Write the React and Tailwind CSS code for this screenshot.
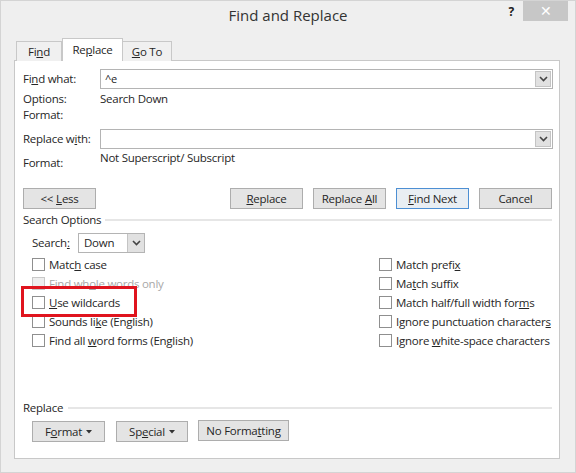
import React from 'react';

const Chevron = () => (
    <svg width="9" height="6" viewBox="0 0 9 6" fill="none">
        <path d="M1 1 L4.5 4.5 L8 1" stroke="#444" strokeWidth="1.6" />
    </svg>
);

const Caret = () => (
    <svg width="6" height="4" viewBox="0 0 6 4" className="ml-[4px]">
        <path d="M0 0 H6 L3 3.5 Z" fill="#333" />
    </svg>
);

const Combo = ({ value }) => (
    <div className="flex-1 h-[20px] border border-[#b4b4b4] bg-white flex items-center">
        <span className="flex-1 pl-[4px] text-[11px]">{value}</span>
        <div className="w-[16px] h-[16px] mr-[1px] bg-[#e1e1e1] border border-[#c4c4c4] flex items-center justify-center">
            <Chevron />
        </div>
    </div>
);

const Button = ({ children, className = '', primary }) => (
    <div
        className={
            'h-[21px] flex items-center justify-center border whitespace-nowrap ' +
            (primary ? 'border-[#4d8fd3] bg-[#e9eef3] ' : 'border-[#adadad] bg-[#e4e4e4] ') +
            className
        }
    >
        {children}
    </div>
);

const Check = ({ label, disabled }) => (
    <div className={'h-[19px] flex items-center whitespace-nowrap ' + (disabled ? 'text-[#a8a8a8]' : '')}>
        <div
            className={
                'w-[13px] h-[13px] shrink-0 border mr-[4px] ' +
                (disabled ? 'border-[#c8c8c8] bg-[#eeeeee]' : 'border-[#8f8f8f] bg-white')
            }
        />
        <span>{label}</span>
    </div>
);

export default function App() {
    return (
        <div
            className="w-[576px] h-[473px] bg-[#efefef] border border-[#d4d4d4] flex flex-col text-[11.5px] leading-[16px] tracking-[-0.25px] text-[#262626]"
            style={{ fontFamily: '"Segoe UI", "Open Sans", "Noto Sans", sans-serif' }}
        >
            {/* title bar */}
            <div className="h-[34px] flex items-start">
                <div className="w-[80px]" />
                <div className="flex-1 text-center text-[15px] leading-[20px] pt-[4px] tracking-normal text-[#333]">Find and Replace</div>
                <div className="w-[80px] flex items-start justify-end pr-[7px]">
                    <span className="font-bold text-[12px] mt-[3px] mr-[9px] text-[#222]">?</span>
                    <div className="w-[45px] h-[20px] bg-[#c7c7c7] flex items-center justify-center text-white text-[14px]">✕</div>
                </div>
            </div>

            {/* tabs */}
            <div className="flex items-end pl-[15px] h-[26px] -mb-px relative z-10">
                <div className="w-[46px] h-[20px] border border-[#c8c8c8] border-b-0 bg-[#f0f0f0] flex items-center justify-center">
                    <span>Fi<u>n</u>d</span>
                </div>
                <div className="w-[61px] h-[23px] border border-[#c8c8c8] border-b-0 bg-white flex items-center justify-center">
                    <span>Re<u>p</u>lace</span>
                </div>
                <div className="w-[49px] h-[20px] border border-[#c8c8c8] border-b-0 border-l-0 bg-[#f0f0f0] flex items-center justify-center">
                    <span><u>G</u>o To</span>
                </div>
            </div>

            {/* panel */}
            <div className="ml-[13px] w-[546px] h-[399px] bg-white border border-[#c8c8c8] pt-[8px] pl-[8px] pr-[6px] flex flex-col">
                <div className="flex items-center h-[20px]">
                    <span className="w-[77px]">Fi<u>n</u>d what:</span>
                    <Combo value="^e" />
                </div>
                <div className="flex h-[16px] mt-[2px]">
                    <span className="w-[77px]">Options:</span>
                    <span>Search Down</span>
                </div>
                <div className="flex h-[16px]">
                    <span className="w-[77px]">Format:</span>
                </div>
                <div className="flex items-center h-[20px] mt-[6px]">
                    <span className="w-[77px]">Replace w<u>i</u>th:</span>
                    <Combo value="" />
                </div>
                <div className="flex h-[22px] mt-[1px]">
                    <span className="w-[77px] pt-[5px]">Format:</span>
                    <span>Not Superscript/ Subscript</span>
                </div>

                <div className="flex h-[21px] mt-[16px]">
                    <Button className="w-[73px]">&lt;&lt; <u className="ml-[3px]">L</u>ess</Button>
                    <Button className="w-[73px] ml-[134px]"><u>R</u>eplace</Button>
                    <Button className="w-[73px] ml-[10px]">Replace <u className="ml-[3px]">A</u>ll</Button>
                    <Button className="w-[73px] ml-[10px]" primary><u>F</u>ind Next</Button>
                    <Button className="w-[73px] ml-[10px]">Cancel</Button>
                </div>

                <div className="flex items-center h-[16px] mt-[3px]">
                    <span>Search Options</span>
                    <div className="flex-1 h-[2px] bg-[#e6e6e6] ml-[4px] mr-[1px]" />
                </div>

                <div className="flex items-center h-[20px] mt-[5px] ml-[9px]">
                    <span className="w-[46px]">Search<u>:</u></span>
                    <div className="w-[67px] h-[20px] border border-[#b4b4b4] flex items-center">
                        <span className="flex-1 pl-[5px]">Down</span>
                        <div className="w-[17px] h-[18px] bg-[#e1e1e1] border-l border-[#c4c4c4] flex items-center justify-center">
                            <Chevron />
                        </div>
                    </div>
                </div>

                <div className="flex mt-[2px] ml-[9px] relative">
                    <div className="w-[347px] shrink-0 flex flex-col">
                        <Check label={<>Matc<u>h</u> case</>} />
                        <Check label={<>Find wh<u>o</u>le words only</>} disabled />
                        <Check label={<><u>U</u>se wildcards</>} />
                        <Check label={<>Sounds li<u>k</u>e (English)</>} />
                        <Check label={<>Find all <u>w</u>ord forms (English)</>} />
                    </div>
                    <div className="flex flex-col">
                        <Check label={<>Match prefi<u>x</u></>} />
                        <Check label={<>Ma<u>t</u>ch suffix</>} />
                        <Check label={<>Match half/full width for<u>m</u>s</>} />
                        <Check label={<>Ignore punctuation character<u>s</u></>} />
                        <Check label={<>Ignore <u>w</u>hite-space characters</>} />
                    </div>
                    {/* red highlight */}
                    <div className="absolute left-[-11px] top-[31px] w-[116px] h-[31px] border-[3px] border-[#e0141e]" />
                </div>

                <div className="flex items-center h-[16px] mt-[50px]">
                    <span>Replace</span>
                    <div className="flex-1 h-[2px] bg-[#e6e6e6] ml-[5px] mr-[1px]" />
                </div>

                <div className="flex items-start mt-[4px] ml-[9px]">
                    <Button className="w-[73px] mt-[1px]">F<u>o</u>rmat<Caret /></Button>
                    <Button className="w-[72px] ml-[11px] mt-[1px]">Sp<u>e</u>cial<Caret /></Button>
                    <Button className="w-[91px] ml-[10px]">No Forma<u>t</u>ting</Button>
                </div>
            </div>
        </div>
    );
}
